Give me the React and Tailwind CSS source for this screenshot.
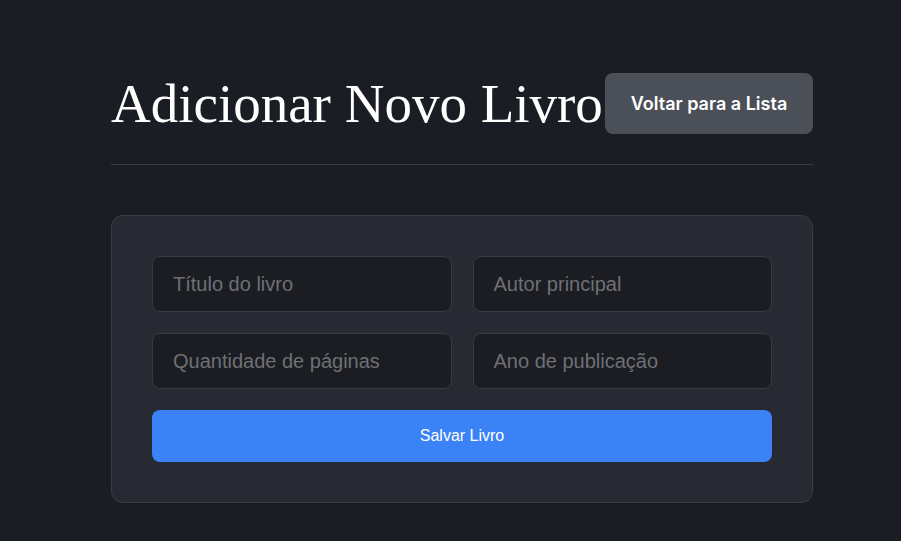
import React, { useState } from "react";

const fields = [
  { name: "titulo", placeholder: "Título do livro" },
  { name: "autor", placeholder: "Autor principal" },
  { name: "paginas", placeholder: "Quantidade de páginas" },
  { name: "ano", placeholder: "Ano de publicação" },
];

const App = () => {
  const [form, setForm] = useState({ titulo: "", autor: "", paginas: "", ano: "" });

  return (
    <div className="min-h-screen bg-[#1b1d24] pt-[73px] font-['Liberation_Sans',Arial,sans-serif]">
      <div className="ml-[111px] w-[702px]">
        {/* Header */}
        <div className="flex items-center justify-between border-b border-[#3a3d45] pb-[30px]">
          <h1 className="font-['Liberation_Serif','Times_New_Roman',serif] text-[55px] leading-none text-white whitespace-nowrap">
            Adicionar Novo Livro
          </h1>
          <button className="h-[61px] w-[208px] rounded-lg bg-[#4b5058] text-white text-[18px] font-semibold font-['Inter',sans-serif]">
            Voltar para a Lista
          </button>
        </div>

        {/* Form card */}
        <form
          onSubmit={(e) => e.preventDefault()}
          className="mt-[50px] rounded-xl border border-[#393c45] bg-[#272a33] p-10"
        >
          <div className="grid grid-cols-2 gap-x-[21px] gap-y-[21px]">
            {fields.map((f) => (
              <input
                key={f.name}
                value={form[f.name]}
                onChange={(e) => setForm({ ...form, [f.name]: e.target.value })}
                placeholder={f.placeholder}
                className="h-[56px] rounded-lg border border-[#383b44] bg-[#1b1d23] px-5 text-[20px] text-white placeholder:text-[#6e7075] outline-none"
              />
            ))}
          </div>
          <button
            type="submit"
            className="mt-[21px] h-[52px] w-full rounded-lg bg-[#3b82f6] text-white text-[16px]"
          >
            Salvar Livro
          </button>
        </form>
      </div>
    </div>
  );
};

export default App;
